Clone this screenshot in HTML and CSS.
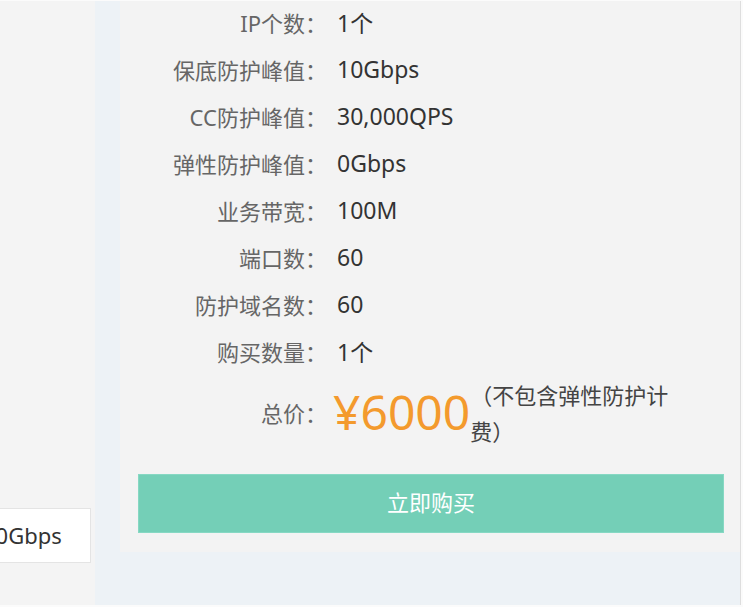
FILE: index.html
```html
<!DOCTYPE html>
<html lang="zh-CN">
<head>
<meta charset="utf-8">
<title>购买</title>
<link rel="stylesheet" href="styles.css">
</head>
<body>
<div class="page">
  <aside class="side">
    <div class="field">10Gbps</div>
  </aside>
  <main class="main">
    <section class="panel">
      <div class="row"><span class="label">IP个数<span class="colon">：</span></span><span class="value">1个</span></div>
      <div class="row"><span class="label">保底防护峰值<span class="colon">：</span></span><span class="value">10Gbps</span></div>
      <div class="row"><span class="label">CC防护峰值<span class="colon">：</span></span><span class="value">30,000QPS</span></div>
      <div class="row"><span class="label">弹性防护峰值<span class="colon">：</span></span><span class="value">0Gbps</span></div>
      <div class="row"><span class="label">业务带宽<span class="colon">：</span></span><span class="value">100M</span></div>
      <div class="row"><span class="label">端口数<span class="colon">：</span></span><span class="value">60</span></div>
      <div class="row"><span class="label">防护域名数<span class="colon">：</span></span><span class="value">60</span></div>
      <div class="row"><span class="label">购买数量<span class="colon">：</span></span><span class="value">1个</span></div>
      <div class="row price-row">
        <span class="label">总价<span class="colon">：</span></span>
        <span class="price">¥6000</span>
        <span class="note">（不包含弹性防护计费）</span>
      </div>
      <button class="buy" type="button">立即购买</button>
    </section>
  </main>
</div>
</body>
</html>
```
FILE: styles.css
```css
* { box-sizing: border-box; }

body {
  margin: 0;
  background: #fbfbfb;
  font-family: "Noto Sans", "Noto Sans CJK SC", sans-serif;
  font-size: 22px;
}

.page {
  display: flex;
  margin-top: 1px;
  height: 604px;
}

.side {
  width: 95px;
  flex: none;
  background: #f4f4f4;
  overflow: hidden;
  display: flex;
  flex-direction: column;
  justify-content: flex-end;
  padding-bottom: 42px;
}

.field {
  margin-left: -28px;
  width: 119px;
  height: 55px;
  background: #fff;
  border: 1px solid #e4e4e4;
  padding-left: 10px;
  line-height: 53px;
  color: #333;
  white-space: nowrap;
}

.main {
  width: 646px;
  flex: none;
  background: #edf2f6;
  padding: 0 0 53px 25px;
  border-right: 1px solid #dedede;
}

.panel {
  background: #f3f3f3;
  padding: 0 16px 19px 18px;
}

.row {
  display: flex;
  align-items: center;
  height: 47px;
  padding-bottom: 5px;
}

.label {
  width: 189px;
  flex: none;
  text-align: right;
  color: #666;
}

.colon {
  font-family: "Noto Sans CJK TC", sans-serif;
}

.value {
  margin-left: 10px;
  color: #333;
  font-size: 23px;
}

.price-row {
  height: 74px;
  padding-bottom: 4px;
}

.price {
  margin-left: 6px;
  font-size: 48px;
  line-height: 60px;
  color: #f39a2d;
}

.note {
  width: 215px;
  line-height: 36px;
  color: #444;
  font-family: "Noto Sans CJK TC", sans-serif;
}

.buy {
  display: block;
  width: 100%;
  height: 59px;
  margin-top: 23px;
  padding: 0 0 5px;
  border: 1px solid #86d8c3;
  background: #74cfb7;
  color: #fff;
  font-family: inherit;
  font-size: 22px;
  cursor: pointer;
}
```
